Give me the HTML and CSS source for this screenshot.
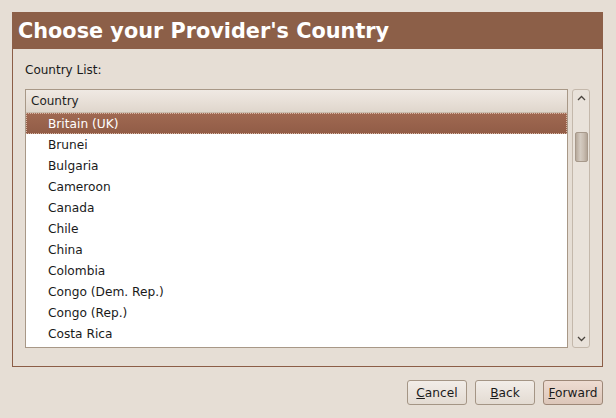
FILE: index.html
```html
<!DOCTYPE html>
<html>
<head>
<meta charset="utf-8">
<link rel="stylesheet" href="styles.css">
</head>
<body>
<div class="page">
  <div class="frame">
    <div class="banner">Choose your Provider's Country</div>
    <div class="content">
      <div class="label">Country List:</div>
      <div class="listarea">
        <div class="list">
          <div class="colhead">Country</div>
          <div class="row selected">Britain (UK)</div>
          <div class="row">Brunei</div>
          <div class="row">Bulgaria</div>
          <div class="row">Cameroon</div>
          <div class="row">Canada</div>
          <div class="row">Chile</div>
          <div class="row">China</div>
          <div class="row">Colombia</div>
          <div class="row">Congo (Dem. Rep.)</div>
          <div class="row">Congo (Rep.)</div>
          <div class="row">Costa Rica</div>
        </div>
        <div class="scrollbar">
          <svg class="arrow" width="9" height="6" viewBox="0 0 9 6"><path d="M1 5 L4.5 1.5 L8 5" fill="none" stroke="#4a443e" stroke-width="1.3"/></svg>
          <div class="track"><div class="thumb"></div></div>
          <svg class="arrow" width="9" height="6" viewBox="0 0 9 6"><path d="M1 1 L4.5 4.5 L8 1" fill="none" stroke="#4a443e" stroke-width="1.3"/></svg>
        </div>
      </div>
    </div>
  </div>
  <div class="buttons">
    <button class="btn"><u>C</u>ancel</button>
    <button class="btn"><u>B</u>ack</button>
    <button class="btn default"><u>F</u>orward</button>
  </div>
</div>
</body>
</html>
```
FILE: styles.css
```css
html, body {
  margin: 0;
  padding: 0;
  background: #e6ded5;
  font-family: "DejaVu Sans", "Liberation Sans", sans-serif;
  font-size: 12px;
  color: #1a1a1a;
}
.page {
  padding: 12px 13px 0 12px;
  width: 591px;
}
.frame {
  border: 1px solid #8c5e47;
  border-top: none;
}
.banner {
  background: #8c5f48;
  color: #ffffff;
  font-weight: bold;
  font-size: 20.8px;
  height: 37px;
  line-height: 39px;
  padding-left: 6px;
  margin: 0 -1px;
}
.content {
  padding: 13px 12px 18px 12px;
}
.label {
  line-height: 16px;
  height: 27px;
}
.listarea {
  display: flex;
  gap: 4px;
  height: 259px;
}
.list {
  flex: 1;
  border: 1px solid #a89887;
  background: #ffffff;
  overflow: hidden;
}
.colhead {
  height: 23px;
  line-height: 23px;
  padding-left: 5px;
  background: linear-gradient(#efe9e3, #e8e0d8 50%, #dfd6cc);
  border-bottom: 1px solid #c9bcae;
  box-sizing: border-box;
  color: #1e1e1e;
}
.row {
  height: 21px;
  line-height: 23px;
  padding-left: 22px;
  font-size: 12.2px;
  color: #1a1a1a;
}
.row.selected {
  background: linear-gradient(#a06952, #915c46);
  color: #ffffff;
  outline: 1px dotted #d9b7a6;
  outline-offset: -1px;
}
.scrollbar {
  width: 16px;
  border: 1px solid #c4b8ab;
  border-radius: 3px;
  background: #e9e2da;
  display: flex;
  flex-direction: column;
  align-items: center;
  padding: 5px 0 5px 0;
}
.arrow {
  flex: none;
}
.track {
  flex: 1;
  width: 100%;
  padding-top: 31px;
  box-sizing: border-box;
  display: flex;
  justify-content: center;
}
.thumb {
  width: 13px;
  height: 30px;
  border: 1px solid #a7998b;
  border-radius: 2px;
  background: linear-gradient(90deg, #b7a99b, #d4cbc1 40%, #c9bdb1 70%, #b3a597);
  box-sizing: border-box;
}
.buttons {
  display: flex;
  justify-content: flex-end;
  gap: 8px;
  padding-top: 13px;
}
.btn {
  width: 60px;
  height: 25px;
  font-family: "DejaVu Sans", "Liberation Sans", sans-serif;
  font-size: 12.2px;
  color: #1a1a1a;
  border: 1px solid #a49585;
  border-radius: 3px;
  background: linear-gradient(#f2ede8, #e3dbd2);
  padding: 0;
}
.btn.default {
  background: linear-gradient(#eedcd2, #dcc6b9);
  border-color: #9d8777;
}
```
